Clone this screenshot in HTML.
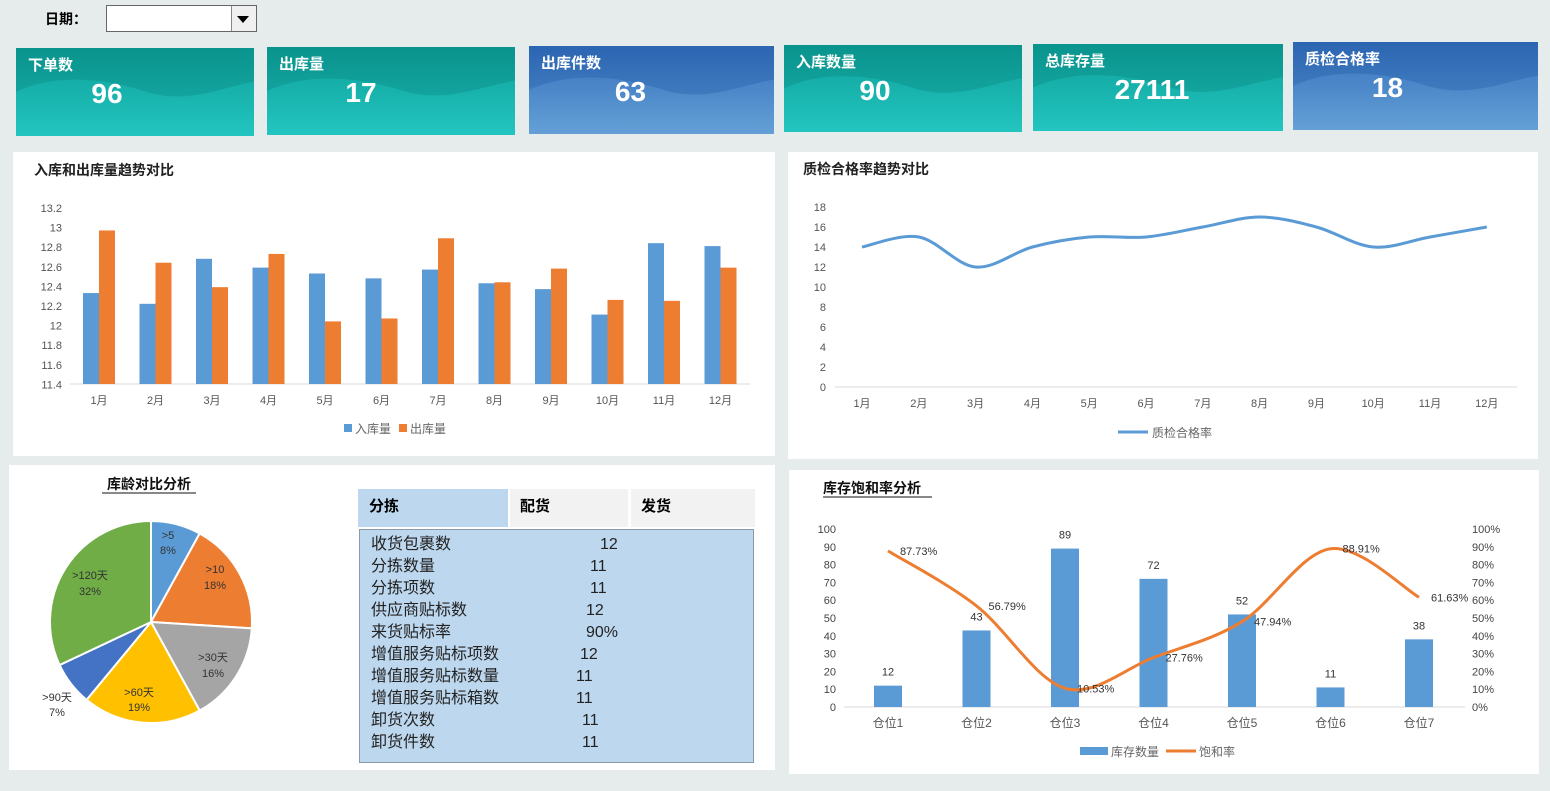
<!DOCTYPE html>
<html><head><meta charset="utf-8">
<style>
body{margin:0;width:1550px;height:791px;background:#e6ecec;position:relative;overflow:hidden;font-family:"Liberation Sans","Noto Sans CJK SC",sans-serif;}
.abs{position:absolute}
.card{position:absolute;overflow:hidden;color:#fff}
.card .t{position:absolute;left:12px;top:6px;font-size:15px;font-weight:bold}
.card .v{position:absolute;left:0;right:0;top:30px;font-size:28px;font-weight:bold;text-align:center}
.teal{background:linear-gradient(#0d9f98,#23c5c0)}
.blue{background:linear-gradient(#3470bc,#64a0d6)}
.panel{position:absolute;background:#fff}
svg text{font-family:"Liberation Sans","Noto Sans CJK SC",sans-serif}
.tbl{font-size:16px;color:#222}
.tbl div{position:absolute;left:11px;height:22px;line-height:22px;white-space:nowrap}
</style></head><body>
<div class="abs" style="left:45px;top:9px;font-size:14px;font-weight:bold">日期：</div>
<div class="abs" style="left:106px;top:5px;width:149px;height:25px;border:1px solid #666;background:#fff;overflow:hidden">
 <div class="abs" style="left:124px;top:0;width:24px;height:25px;background:#f0f0f0;border-left:1px solid #888"></div>
 <div class="abs" style="left:130px;top:10px;width:0;height:0;border-left:6px solid transparent;border-right:6px solid transparent;border-top:7px solid #000"></div>
</div>
<div id="cards"></div>
<div class="panel" style="left:13px;top:152px;width:762px;height:304px"></div>
<div class="panel" style="left:788px;top:152px;width:750px;height:307px"></div>
<div class="panel" style="left:9px;top:465px;width:766px;height:305px"></div>
<div class="panel" style="left:789px;top:470px;width:750px;height:304px"></div>
<svg id="s" class="abs" style="left:0;top:0" width="1550" height="791"></svg>
<div class="abs" style="left:358px;top:489px;width:150px;height:38px;background:#bdd7ee;font-weight:bold;font-size:15px"><span style="position:absolute;left:11px;top:6px">分拣</span></div>
<div class="abs" style="left:510px;top:489px;width:118px;height:38px;background:#f2f2f2;font-weight:bold;font-size:15px"><span style="position:absolute;left:10px;top:6px">配货</span></div>
<div class="abs" style="left:631px;top:489px;width:124px;height:38px;background:#f2f2f2;font-weight:bold;font-size:15px"><span style="position:absolute;left:10px;top:6px">发货</span></div>
<div class="abs tbl" style="left:359px;top:529px;width:393px;height:232px;background:#bdd7ee;border:1px solid #8a9aa8" id="tb"></div>
<script>
var cards=[[16,48,238,88,'teal','下单数','96',-28],[267,47,248,88,'teal','出库量','17',-30],[529,46,245,88,'blue','出库件数','63',-21],[784,45,238,87,'teal','入库数量','90',-28],[1033,44,250,87,'teal','总库存量','27111',-6],[1293,42,245,88,'blue','质检合格率','18',-28]];
var h='';cards.forEach(function(c){var dark=c[4]=='teal'?'rgba(0,110,105,0.45)':'rgba(20,70,150,0.5)';
h+='<div class="card '+c[4]+'" style="left:'+c[0]+'px;top:'+c[1]+'px;width:'+c[2]+'px;height:'+c[3]+'px"><svg width="'+c[2]+'" height="'+c[3]+'" style="position:absolute;left:0;top:0" viewBox="0 0 100 100" preserveAspectRatio="none"><path d="M0 50 C15 30 35 32 55 50 C72 64 86 45 100 38 L100 0 0 0Z" fill="'+dark+'" opacity="0.5"/></svg><div class="t">'+c[5]+'</div><div class="v" style="left:'+(2*c[7])+'px">'+c[6]+'</div></div>';});
document.getElementById('cards').innerHTML=h;
var rows=[['收货包裹数','12',240],['分拣数量','11',230],['分拣项数','11',230],['供应商贴标数','12',226],['来货贴标率','90%',226],['增值服务贴标项数','12',220],['增值服务贴标数量','11',216],['增值服务贴标箱数','11',216],['卸货次数','11',222],['卸货件数','11',222]];
var t='';rows.forEach(function(r,i){t+='<div style="top:'+(4+i*22)+'px">'+r[0]+'</div><div style="left:'+r[2]+'px;top:'+(4+i*22)+'px">'+r[1]+'</div>';});
document.getElementById('tb').innerHTML=t;
var S='';
function tx(x,y,s,sz,col,anc,w){S+='<text x="'+x+'" y="'+y+'" font-size="'+sz+'" fill="'+col+'" text-anchor="'+(anc||'start')+'"'+(w?' font-weight="bold"':'')+'>'+s+'</text>';}
function smooth(p){var d='M'+p[0][0]+' '+p[0][1];for(var i=0;i<p.length-1;i++){var p0=p[i-1]||p[i],p1=p[i],p2=p[i+1],p3=p[i+2]||p2;d+=' C'+(p1[0]+(p2[0]-p0[0])/6)+' '+(p1[1]+(p2[1]-p0[1])/6)+' '+(p2[0]-(p3[0]-p1[0])/6)+' '+(p2[1]-(p3[1]-p1[1])/6)+' '+p2[0]+' '+p2[1];}return d;}
tx(34,175,'入库和出库量趋势对比',14,'#222','start',1);
var b=[12.33,12.22,12.68,12.59,12.53,12.48,12.57,12.43,12.37,12.11,12.84,12.81],o=[12.97,12.64,12.39,12.73,12.04,12.07,12.89,12.44,12.58,12.26,12.25,12.59];
for(var i=0;i<10;i++){var v=(13.2-i*0.2).toFixed(1).replace('.0','');tx(62,212+i*19.6,v,11,'#555','end');}
S+='<line x1="70" y1="384" x2="750" y2="384" stroke="#d9d9d9"/>';
function y1(v){return 384-(v-11.4)*97.8;}
for(i=0;i<12;i++){var cx=99+i*56.5;S+='<rect x="'+(cx-16)+'" y="'+y1(b[i])+'" width="16" height="'+(384-y1(b[i]))+'" fill="#5b9bd5"/><rect x="'+cx+'" y="'+y1(o[i])+'" width="16" height="'+(384-y1(o[i]))+'" fill="#ed7d31"/>';tx(cx,404,(i+1)+'月',11,'#555','middle');}
S+='<rect x="344" y="424" width="8" height="8" fill="#5b9bd5"/><rect x="399" y="424" width="8" height="8" fill="#ed7d31"/>';tx(355,433,'入库量',12,'#666');tx(410,433,'出库量',12,'#666');
tx(803,174,'质检合格率趋势对比',14,'#222','start',1);
for(i=0;i<10;i++)tx(826,211+i*20,18-i*2,11,'#555','end');
S+='<line x1="835" y1="387" x2="1517" y2="387" stroke="#d9d9d9"/>';
var q=[14,15,12,14,15,15,16,17,16,14,15,16],pp=[];
for(i=0;i<12;i++){var x=862+i*56.8;pp.push([x,387-q[i]*10]);tx(x,407,(i+1)+'月',11,'#555','middle');}
S+='<path d="'+smooth(pp)+'" fill="none" stroke="#5b9bd5" stroke-width="3"/>';
S+='<line x1="1118" y1="432" x2="1148" y2="432" stroke="#5b9bd5" stroke-width="3"/>';tx(1152,437,'质检合格率',12,'#666');
tx(149,489,'库龄对比分析',14,'#111','middle',1);S+='<line x1="102" y1="493" x2="196" y2="493" stroke="#111"/>';
var sl=[[8,'#5b9bd5'],[18,'#ed7d31'],[16,'#a5a5a5'],[19,'#ffc000'],[7,'#4472c4'],[32,'#70ad47']],a=0,cx=151,cy=622,R=101;
sl.forEach(function(s){var a2=a+s[0]/100*2*Math.PI;var x1=cx+R*Math.sin(a),yy1=cy-R*Math.cos(a),x2=cx+R*Math.sin(a2),yy2=cy-R*Math.cos(a2);
S+='<path d="M'+cx+' '+cy+' L'+x1+' '+yy1+' A'+R+' '+R+' 0 '+(a2-a>Math.PI?1:0)+' 1 '+x2+' '+yy2+'Z" fill="'+s[1]+'" stroke="#fff" stroke-width="2"/>';a=a2;});
[[168,539,'>5'],[168,554,'8%'],[215,573,'>10'],[215,589,'18%'],[213,661,'>30天'],[213,677,'16%'],[139,696,'>60天'],[139,711,'19%'],[57,701,'>90天'],[57,716,'7%'],[90,579,'>120天'],[90,595,'32%']].forEach(function(l){tx(l[0],l[1],l[2],11,'#333','middle');});
tx(823,493,'库存饱和率分析',14,'#111','start',1);S+='<line x1="823" y1="497" x2="932" y2="497" stroke="#111"/>';
for(i=0;i<=10;i++){var yy=707-i*17.8;tx(836,yy+4,i*10,11,'#444','end');tx(1472,yy+4,(i*10)+'%',11,'#444');}
S+='<line x1="844" y1="707" x2="1465" y2="707" stroke="#d9d9d9"/>';
var bv=[12,43,89,72,52,11,38],lv=[87.73,56.79,10.53,27.76,47.94,88.91,61.63],lp=[];
for(i=0;i<7;i++){var x=888+i*88.5,yb=707-bv[i]*1.78;S+='<rect x="'+(x-14)+'" y="'+yb+'" width="28" height="'+(707-yb)+'" fill="#5b9bd5"/>';tx(x,yb-10,bv[i],11,'#333','middle');tx(x,727,'仓位'+(i+1),12,'#555','middle');lp.push([x,707-lv[i]*1.78]);}
S+='<path d="'+smooth(lp)+'" fill="none" stroke="#ed7d31" stroke-width="3"/>';
lp.forEach(function(p,i){tx(p[0]+12,p[1]+4,lv[i].toFixed(2)+'%',11,'#333');});
S+='<rect x="1080" y="747" width="28" height="8" fill="#5b9bd5"/>';tx(1111,756,'库存数量',12,'#666');
S+='<line x1="1166" y1="751" x2="1196" y2="751" stroke="#ed7d31" stroke-width="3"/>';tx(1199,756,'饱和率',12,'#666');
document.getElementById('s').innerHTML=S;
</script>
</body></html>
